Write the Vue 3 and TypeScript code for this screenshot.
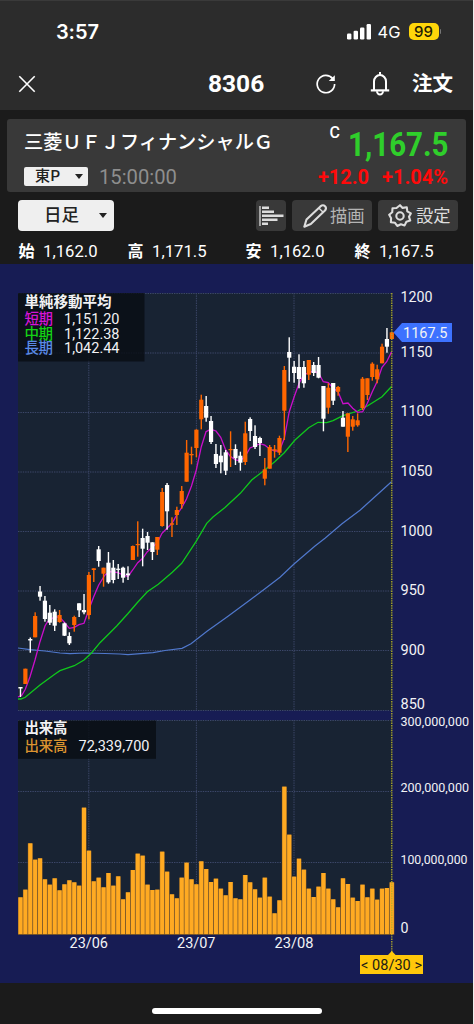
<script setup lang="ts">
type Candle = [up: 0 | 1, bodyTop: number, bodyBottom: number, wickTop: number, wickBottom: number]
interface Label { text: string; x: number; y: number; width: number; size: number }

const PITCH = 4.886
const FIRST = 20.5
const TOP = 264

const candles: Candle[] = [
  [0, 687, 688.5, 687, 697], [1, 668.7, 684, 668.7, 684], [0, 639, 640.5, 637.5, 652.7],
  [1, 616, 637.3, 612.3, 637.3], [0, 591.5, 596.7, 586, 600.7], [0, 600.7, 619, 596, 621.7],
  [0, 612.7, 622.7, 605, 625], [0, 611.7, 625.7, 609.3, 631], [1, 615, 622, 610, 622.7],
  [0, 623.3, 635.7, 622.5, 636], [0, 636, 643.3, 632.3, 645], [1, 617, 625, 615.7, 631.7],
  [0, 603.3, 610.3, 603.3, 617], [0, 610, 612.3, 594, 614.3], [1, 575, 615, 572, 619.3],
  [1, 568.3, 570, 568.3, 582], [0, 549.3, 561, 546, 566.7], [1, 567.7, 573.7, 567.7, 586.7],
  [0, 562.7, 582.3, 552, 583.7], [0, 567.7, 580, 560, 583.3], [0, 568.7, 569.9, 564, 579],
  [0, 567.7, 577.7, 566.7, 582.7], [0, 573.5, 575.3, 566.3, 580], [1, 546, 560, 545.5, 560],
  [1, 544, 545.2, 521.3, 556.7], [0, 538, 548.7, 528.7, 566.3], [0, 536, 542.7, 532, 550],
  [0, 542.3, 552, 542.3, 560], [1, 537, 549.7, 537, 555], [1, 492, 526, 488, 526.7],
  [0, 485, 511.3, 483, 529.7], [1, 523.3, 524.7, 517.3, 537], [1, 510, 515, 506.7, 525],
  [1, 491, 504, 486, 508.7], [1, 452.7, 481.7, 440, 481.7], [1, 454, 455.3, 446.7, 464.3],
  [1, 429.7, 448, 429.3, 457.3], [1, 399.7, 419.3, 394.7, 429.3], [0, 406, 417.7, 396, 421.7],
  [0, 421, 442, 416, 444], [0, 454, 464, 444, 468], [0, 455.7, 462.3, 445, 473.3],
  [0, 452.3, 470.7, 450, 475], [1, 449, 450.2, 431.3, 467], [0, 449, 458.3, 444.3, 465],
  [0, 455.7, 462.7, 451.7, 470.7], [1, 433.3, 462, 421.7, 465], [0, 419, 431, 417.3, 441],
  [0, 436, 447, 425.3, 449], [0, 438, 443, 436.7, 456], [1, 469.3, 478.7, 458, 485.3],
  [1, 447, 468.7, 445, 468.7], [1, 449.3, 450.7, 445, 457.7], [1, 438, 452.7, 435.7, 455],
  [1, 370, 410.7, 366, 440], [0, 352, 357.7, 337.3, 381.7], [0, 366.7, 373, 361, 382.7],
  [0, 367, 379, 354.3, 388.3], [0, 367, 383.3, 361, 387.7], [1, 360, 374.7, 360, 380],
  [0, 365, 373, 362, 376], [0, 365, 377.7, 357, 378.3], [0, 386, 418.7, 386, 431.3],
  [1, 387.7, 407.7, 383.3, 413.7], [0, 383, 400.7, 383, 405], [1, 387, 391.7, 386, 395.7],
  [0, 417.7, 426.7, 411, 426.7], [1, 413.3, 436.7, 413.3, 452], [1, 419.3, 426.7, 416, 430.7],
  [1, 420.3, 425.3, 413.3, 426.7], [1, 378.7, 408, 377, 410], [1, 378.3, 395, 378.3, 400],
  [1, 363.7, 377, 362.3, 380.7], [1, 369.3, 379.3, 364.7, 383.3], [1, 346.7, 363.3, 343.7, 363.3],
  [0, 339, 346.7, 328, 352.7], [1, 332.3, 339, 332.3, 339],
]

const volumeTops: number[] = [
  562, 539, 400, 449, 445, 508, 524, 505, 541, 523, 511, 517, 527, 293, 422, 514, 503, 532, 489, 527,
  499, 568, 547, 480, 431, 437, 524, 540, 539, 425, 485, 553, 565, 503, 458, 508, 523, 454, 477, 516,
  506, 536, 556, 516, 565, 568, 495, 517, 538, 563, 503, 560, 610, 571, 230, 374, 500, 446, 479, 536,
  561, 530, 489, 536, 568, 592, 505, 522, 563, 573, 524, 562, 536, 569, 536, 534, 517,
].map((v) => 710 + v / 3)

const shortMa = '18,697 22,695 25.3,689.3 30,676.7 35,660 40,641.7 45,626 47.5,621.7 54.7,616.7 59.7,617.3 64.3,622.3 69.3,628.3 74.3,627.3 79,624.7 84,623.3 88.7,610 93.7,596.7 98.7,585 105,575 110,571.7 118,572.7 123,575 128,576.5 132.7,570 137.7,562.7 142.7,558.3 147.3,551.7 152.3,547.3 157.3,542.7 162,533.3 167,528.3 172,523.3 176.7,515 181.7,507.7 186.5,499 191.5,486 196.3,470 201.3,446.7 206,431.7 210.7,429.3 216,431 220.7,437.3 225.7,450 230,456 235.3,460 240.3,460.7 245.3,456 250,448 255,446 260,443.7 264.7,445 269.7,449 274.7,451 279.3,451 284.3,438.3 289.2,412 294.2,396.7 299,383.5 303.7,375 308.7,372.7 313.7,371 318.7,373.3 323.3,381.7 328.3,382.7 333.3,388.3 338,391.7 343,403.7 348,403 352.7,408.3 357.7,412.3 362.7,411.7 367.3,403.3 372.3,391.7 377,381.7 382,367.3 386.7,361.7 391.5,352'
const middleMa = '18,699 21,699 25.3,697.3 40,685 54.7,674.3 60,670.7 74.3,665.7 84,660 91.7,652.7 100,642.7 110,632.7 116.7,626 128,613.5 137,603 147.3,591.7 158.3,584.3 172.3,572.3 181.7,563.3 196,541.7 206.7,523.3 213,517 225,507.5 240.3,493.3 251.7,480 264.7,470 275,461.5 284.3,452.7 295,440 308.7,427.7 318,422.3 326.7,422.7 333,420.7 343,415.7 357.7,411 367.3,406 382,396.7 391.5,386.5'
const longMa = '18,648 30,649.7 45,651 60,653 70,653.7 85,653 105,653.5 120,654 128,654.7 153,652.7 165,650.5 182,648.3 191,643.7 207,631.3 227,617 250,600 265,588.7 280,577.3 294,564 315,546 325,538.3 342,523.7 360,510.3 391.5,481.7'

const gridYs = [293.5, 353, 412.5, 472, 531.5, 591, 650.5, 710.5, 720.5, 791.5, 862.5]
const gridXs = [88.8, 196.4, 294]

const labels: Label[] = [
  { text: '1200', x: 400.5, y: 302.3, width: 32, size: 14.5 },
  { text: '1150', x: 400.5, y: 357, width: 32, size: 14.5 },
  { text: '1100', x: 400.5, y: 416.3, width: 32, size: 14.5 },
  { text: '1050', x: 400.5, y: 476, width: 32, size: 14.5 },
  { text: '1000', x: 400.5, y: 535.5, width: 32, size: 14.5 },
  { text: '950', x: 400.5, y: 595, width: 24.5, size: 14.5 },
  { text: '900', x: 400.5, y: 654.5, width: 24.5, size: 14.5 },
  { text: '850', x: 400.5, y: 709, width: 24.5, size: 14.5 },
  { text: '300,000,000', x: 400.5, y: 726, width: 68.5, size: 12 },
  { text: '200,000,000', x: 400.5, y: 792, width: 68.5, size: 12 },
  { text: '100,000,000', x: 400.5, y: 863.5, width: 67, size: 12 },
  { text: '0', x: 400.5, y: 932.8, width: 8, size: 14.5 },
  { text: '23/06', x: 69.5, y: 948, width: 38.5, size: 14.5 },
  { text: '23/07', x: 177, y: 948, width: 38.5, size: 14.5 },
  { text: '23/08', x: 274.5, y: 948, width: 39, size: 14.5 },
]

const averages = [
  { name: '短期', value: '1,151.20', color: '#d414d4', y: 324 },
  { name: '中期', value: '1,122.38', color: '#14d214', y: 338.8 },
  { name: '長期', value: '1,042.44', color: '#5a8ae6', y: 353.4 },
]

const prices = [
  { name: '始', value: '1,162.0' },
  { name: '高', value: '1,171.5' },
  { name: '安', value: '1,162.0' },
  { name: '終', value: '1,167.5' },
]

const center = (i: number): number => FIRST + PITCH * i
</script>

<template>
  <div class="screen">
    <header class="top">
      <div class="status">
        <span class="clock">3:57</span>
        <div class="indicators">
          <svg class="signal" width="25" height="16" viewBox="0 0 25 16" fill="#fff">
            <rect x="0" y="9.5" width="4.4" height="6" rx="1.2" />
            <rect x="6.6" y="6.7" width="4.4" height="8.8" rx="1.2" />
            <rect x="13" y="3.6" width="4.4" height="11.9" rx="1.2" />
            <rect x="19.6" y="0" width="4.4" height="15.5" rx="1.2" />
          </svg>
          <span class="network">4G</span>
          <span class="battery">99</span>
          <span class="battery-tip"></span>
        </div>
      </div>
      <nav class="nav">
        <svg class="close" width="18" height="18" viewBox="0 0 18 18" fill="none" stroke="#fff" stroke-width="1.6">
          <path d="M1.3 1.3 16.7 16.7M16.7 1.3 1.3 16.7" />
        </svg>
        <h1 class="code">8306</h1>
        <svg class="refresh" width="22" height="22" viewBox="0 0 22 22" fill="none" stroke="#fff" stroke-width="1.7">
          <path d="M17.7 5.6A8.7 8.7 0 1 0 19.6 11" />
          <path d="M19.8 2.2V7.9H13.8Z" fill="#fff" stroke="none" />
        </svg>
        <svg class="bell" width="20" height="26" viewBox="0 0 20 26" fill="none" stroke="#fff" stroke-width="2">
          <path d="M4 19V10.5A6 6.4 0 0 1 16 10.5V19" />
          <path d="M.8 19.4H19.2" stroke-width="2.2" />
          <path d="M10 1V4M7 20.2A3 3.2 0 0 0 13 20.2" />
        </svg>
        <span class="order">注文</span>
      </nav>
    </header>

    <section class="quote">
      <div class="quote-left">
        <div class="name">三菱ＵＦＪフィナンシャルＧ</div>
        <div class="market-row">
          <button class="market"><span>東P</span><i class="caret"></i></button>
          <span class="time">15:00:00</span>
        </div>
      </div>
      <div class="quote-right">
        <div class="last">
          <span class="flag">C</span>
          <svg class="price" width="101" height="40" viewBox="0 0 101 40">
            <text x="0" y="28.5" textLength="100.5" lengthAdjust="spacingAndGlyphs">1,167.5</text>
          </svg>
        </div>
        <div class="change"><span>+12.0</span><span>+1.04%</span></div>
      </div>
    </section>

    <section class="tools">
      <button class="period"><span>日足</span><i class="caret"></i></button>
      <button class="tool volume-tool">
        <svg width="25" height="22" viewBox="0 0 25 22" stroke="#ddd">
          <path d="M1 1V21" stroke-width="1.3" />
          <path d="M3 2.8H10M3 6.8H15M3 10.8H24.5M3 14.8H18.5M3 18.8H9" stroke-width="2.6" />
        </svg>
      </button>
      <button class="tool draw">
        <svg width="24" height="24" viewBox="0 0 24 24" fill="none" stroke="#ddd" stroke-width="2.1" stroke-linejoin="round">
          <path d="M1.3 22.7 3.5 15.5 17.4 2.4Q20 .2 22 2.2T21.7 6.8L7.8 20Z" />
          <path d="M15.8 4 20.2 8.3" stroke-width="1.5" />
        </svg>
        <span>描画</span>
      </button>
      <button class="tool settings">
        <svg width="24" height="24" viewBox="0 0 24 24" fill="none" stroke="#ddd" stroke-width="2.1" stroke-linejoin="round">
          <path d="M12 1.2 14.6 3.9 18.8 3.3 19.3 7.3 22.8 9.4 21 12.8 22.2 16.6 18.4 17.7 16.6 21.4 12.9 20.2 9.3 22 7 18.8 2.9 18.3 3.1 14.2 1.2 10.8 4.2 8.3 4.5 4.3 8.5 4Z" />
          <circle cx="12" cy="12" r="3.7" />
        </svg>
        <span>設定</span>
      </button>
    </section>

    <section class="ohlc">
      <div v-for="(p, i) in prices" :key="i" class="ohlc-item">
        <b>{{ p.name }}</b><span>{{ p.value }}</span>
      </div>
    </section>

    <svg class="chart" width="473" height="719" :viewBox="`0 ${TOP} 473 719`">
      <rect x="18" y="293" width="374" height="417.5" fill="#182333" />
      <rect x="18" y="720" width="374" height="215" fill="#182333" />
      <g stroke="#3c4769" stroke-width="1" stroke-dasharray="1.4 1">
        <line v-for="y in gridYs" :key="y" x1="18" x2="392" :y1="y" :y2="y" />
        <template v-for="x in gridXs" :key="x">
          <line :x1="x" :x2="x" y1="293" y2="710" />
          <line :x1="x" :x2="x" y1="720" y2="935" />
        </template>
      </g>

      <g v-for="(top, i) in volumeTops" :key="`v${i}`">
        <rect :x="center(i) - 2.45" :y="top" width="4.9" :height="934.7 - top" fill="#9c6a29" />
        <rect :x="center(i) - 2" :y="top" width="4" :height="934 - top" fill="#ffaa22" />
      </g>

      <polyline :points="longMa" fill="none" stroke="#5078cc" stroke-width="1.2" />
      <polyline :points="middleMa" fill="none" stroke="#10c81c" stroke-width="1.3" />
      <polyline :points="shortMa" fill="none" stroke="#cb0ecb" stroke-width="1.3" />
      <g v-for="(c, i) in candles" :key="`c${i}`" :fill="c[0] ? '#ff6600' : '#ffffff'">
        <rect :x="center(i) - 0.7" :y="c[3]" width="1.4" :height="c[4] - c[3]" />
        <rect :x="center(i) - 2.1" :y="c[1]" width="4.2" :height="c[2] - c[1]" />
      </g>

      <path d="M391.8 293V952" stroke="#b5b02c" stroke-width="1.3" stroke-dasharray="1.4 1" />

      <rect x="18" y="293" width="126.5" height="68.5" fill="#090d14" fill-opacity=".82" />
      <text class="jp bold" x="24.5" y="307" textLength="87">単純移動平均</text>
      <g v-for="a in averages" :key="a.name">
        <text class="jp" x="24.5" :y="a.y" textLength="28.5" :fill="a.color">{{ a.name }}</text>
        <text x="64" :y="a.y" font-size="14.5" textLength="55.5">{{ a.value }}</text>
      </g>

      <rect x="18" y="720.5" width="138" height="38.3" fill="#090d14" fill-opacity=".82" />
      <text class="jp bold" x="24.5" y="733.2" textLength="43">出来高</text>
      <text class="jp" x="24.5" y="751" textLength="43" fill="#dc9430">出来高</text>
      <text x="78.5" y="750.5" font-size="14.5" textLength="71">72,339,700</text>

      <text
        v-for="(l, i) in labels" :key="`l${i}`" :x="l.x" :y="l.y" :font-size="l.size"
        :textLength="l.width" lengthAdjust="spacingAndGlyphs"
      >{{ l.text }}</text>

      <path d="M393.5 332.5 402 323H452V342H402Z" fill="#3d72ff" />
      <text x="403" y="338" font-size="14.5" textLength="44.5">1167.5</text>

      <path d="M360 955H388L391.8 951L395.6 955H423V974H360Z" fill="#ffc70a" />
      <text class="date" x="361" y="970" font-size="14.5" textLength="61">&lt; 08/30 &gt;</text>
    </svg>

    <footer class="home"><span></span></footer>
  </div>
</template>

<style>
body {
  background: #1b1b1b;
}
</style>

<style scoped>
.screen {
  box-sizing: border-box;
  width: 474px;
  height: 1024px;
  overflow: hidden;
  border-right: 1px solid #eee;
  background: #1b1b1b;
  color: #fff;
  font-family: Roboto, "Noto Sans CJK JP", sans-serif;
  display: flex;
  flex-direction: column;
}
button {
  border: 0;
  padding: 0;
  font-family: inherit;
}
.top {
  box-sizing: border-box;
  flex: none;
  height: 110px;
  border-top: 1px solid #3a3a3a;
  background: #2c2c2c;
}
.status {
  height: 61px;
  display: flex;
  align-items: center;
  justify-content: space-between;
  padding: 0 32px 0 56px;
}
.clock {
  font: 600 20px/24px Inter, sans-serif;
  letter-spacing: -0.1px;
}
.indicators {
  display: flex;
  align-items: center;
}
.network {
  margin-left: 6px;
  width: 24px;
  font: 400 16.5px/20px Inter, sans-serif;
}
.battery {
  margin-left: 7px;
  width: 30px;
  height: 17px;
  border-radius: 5px;
  background: #ffd60a;
  color: #1d1a05;
  font: 500 15px/17.5px Inter, sans-serif;
  text-align: center;
}
.battery-tip {
  margin-left: 1px;
  width: 1.5px;
  height: 5px;
  border-radius: 0 2px 2px 0;
  background: #777;
}
.nav {
  display: flex;
  align-items: center;
  height: 44px;
  padding-left: 18px;
}
.code {
  margin: 0 0 0 172px;
  width: 56px;
  font-size: 24.5px;
  line-height: 30px;
  font-weight: 700;
}
.refresh {
  margin-left: 51px;
}
.bell {
  margin-left: 33px;
}
.order {
  margin: 0 0 0 22px;
  font-size: 20.5px;
  line-height: 28px;
  font-weight: 700;
}
.quote {
  box-sizing: border-box;
  flex: none;
  display: flex;
  justify-content: space-between;
  margin: 9px 7px 0;
  height: 73px;
  padding: 0 18px 0 17px;
  border-radius: 3px;
  background: #393939;
}
.name {
  margin-top: 11px;
  height: 26px;
  font-size: 19.2px;
  line-height: 26px;
  font-weight: 500;
  white-space: nowrap;
}
.market-row {
  display: flex;
  align-items: center;
  gap: 11px;
  margin-top: 11px;
  height: 19px;
}
.market {
  width: 64px;
  height: 19px;
  border-radius: 2px;
  background: #efefef;
  color: #222;
  display: flex;
  align-items: center;
  justify-content: space-between;
  padding: 0 5px 1px 11px;
  font-size: 15px;
  line-height: 18px;
  font-weight: 500;
  letter-spacing: 0.6px;
}
.caret {
  border: 4.5px solid transparent;
  border-top: 5.5px solid #222;
  border-bottom: 0;
}
.time {
  color: #8e8e8e;
  font-size: 20.2px;
}
.quote-right {
  display: flex;
  flex-direction: column;
  align-items: flex-end;
}
.last {
  display: flex;
  margin: 6px -1px 0 0;
  height: 36px;
}
.flag {
  margin-right: 8px;
  font-size: 16px;
  line-height: 15px;
  font-weight: 500;
}
.price {
  margin-top: 2px;
  fill: #2fce2b;
  font-size: 34px;
  font-weight: 700;
}
.change {
  display: flex;
  gap: 13px;
  margin-top: 4px;
  color: #ff0a0a;
  font-size: 20px;
  line-height: 24px;
  font-weight: 700;
}
.tools {
  flex: none;
  display: flex;
  margin: 8px 0 0 18px;
  height: 31px;
}
.period {
  width: 96px;
  border-radius: 4px;
  background: #efefef;
  color: #222;
  display: flex;
  align-items: center;
  justify-content: space-between;
  padding: 0 7px 1px 26px;
  font-size: 17.5px;
  line-height: 26px;
  font-weight: 500;
}
.tool {
  display: flex;
  align-items: center;
  border-radius: 4px;
  background: #393939;
  color: #ddd;
  font-size: 17.3px;
  line-height: 26px;
}
.volume-tool {
  width: 30px;
  margin-left: 142px;
  padding-left: 3px;
}
.draw {
  width: 80px;
  margin-left: 6px;
  padding-left: 11px;
  gap: 3px;
  color: #b4b4b4;
}
.settings {
  width: 80px;
  margin-left: 6px;
  padding-left: 10px;
  gap: 4px;
}
.ohlc {
  flex: none;
  display: grid;
  grid-template-columns: 109px 118px 109px 100px;
  align-items: center;
  height: 33px;
  padding: 0 0 0 18.5px;
}
.ohlc-item {
  display: flex;
  align-items: center;
  gap: 8.5px;
  padding-top: 9px;
}
.ohlc-item b {
  width: 16px;
  font-size: 16px;
  line-height: 20px;
}
.ohlc-item span {
  font-size: 16.7px;
  line-height: 20px;
}
.chart {
  flex: none;
  display: block;
  background: #171c54;
}
.chart text {
  fill: #f2f2f4;
}
.chart text[fill] {
  fill: revert-layer;
}
.chart .jp {
  font-size: 14.5px;
  font-weight: 500;
}
.chart .bold {
  font-weight: 700;
}
.chart .date {
  fill: #1c1b16;
}
.home {
  flex: 1;
  display: flex;
  justify-content: center;
  padding-top: 25px;
}
.home span {
  width: 170px;
  height: 6px;
  border-radius: 3px;
  background: #fff;
}
</style>
